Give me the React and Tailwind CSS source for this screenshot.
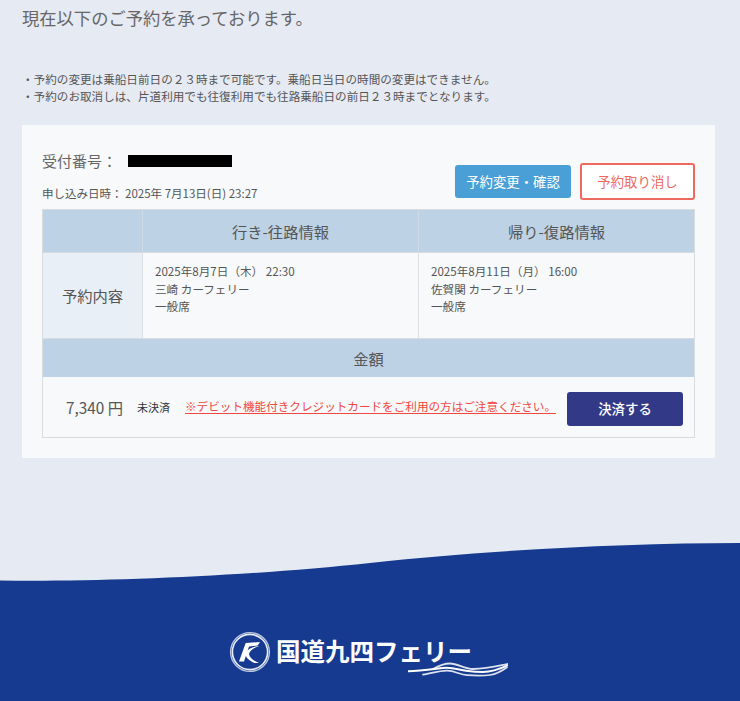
const JP_FONT = "font-['Noto_Sans_CJK_JP','Noto_Sans',sans-serif]"

function LogoMark() {
  return (
    <svg width="42" height="42" viewBox="0 0 42 42" className="shrink-0">
      <circle cx="21" cy="21" r="19.4" fill="none" stroke="#b9c6e2" strokeWidth="1.4" />
      <circle cx="21" cy="21" r="17.6" fill="none" stroke="#e8edf7" strokeWidth="1.6" />
      <path d="M10 30.5 L15 30.5 L20 15.5 L28.7 14.5 L31 11 L16.7 12 Z" fill="#ffffff" />
      <path d="M30.5 15 C 24 17, 20.5 20, 20 23 C 20.5 27, 25 30, 30 32 L 25.5 32 C 21 30, 16.5 27, 16.5 23 C 17 19, 23 15.5, 30.5 15 Z" fill="#ffffff" />
    </svg>
  )
}

function LogoWaves() {
  return (
    <svg width="100" height="18" viewBox="0 0 100 18" className="absolute left-[179px] top-[30px]" fill="none" stroke="#ffffff" strokeLinecap="round">
      <path d="M25 8 C 32 4, 37 2.5, 42 2.5 C 50 2.5, 56 8, 65 8 C 78 8, 90 5, 100 3" strokeWidth="1.8" opacity="0.85" />
      <path d="M0 10.3 C 12 10, 26 8, 35 7 C 44 6, 50 8.5, 58 9.7 C 64 10.5, 69 11, 75 11 C 84 11, 92 8, 99 4.7" strokeWidth="2" />
      <path d="M15 13.7 C 24 12, 32 9.7, 39 9.7 C 47 9.7, 52 14, 59 14.2 C 66 14.6, 74 15, 82 14 C 89 13, 94 10, 99 6.3" strokeWidth="1.7" opacity="0.85" />
    </svg>
  )
}

function TripInfo({ date, port }) {
  return (
    <div className="border-l border-[#dcdfe3] pl-3 pt-[10px] text-[11.6px] leading-[17.5px] text-[#555]">
      <p>{date}</p>
      <p>{port}</p>
      <p>一般席</p>
    </div>
  )
}

export default function App() {
  return (
    <div className={`flex h-[701px] flex-col overflow-hidden bg-[#e6eaf3] ${JP_FONT}`}>
      <main className="flex-1 px-[22px]">
        <h1 className="pt-[6px] text-[17.3px] leading-[24px] text-[#666]">現在以下のご予約を承っております。</h1>

        <div className="mt-[41px] text-[11.6px] leading-[17px] text-[#555]">
          <p>・予約の変更は乗船日前日の２３時まで可能です。乗船日当日の時間の変更はできません。</p>
          <p>・予約のお取消しは、片道利用でも往復利用でも往路乗船日の前日２３時までとなります。</p>
        </div>

        <section className="mt-[20px] h-[333px] w-[693px] bg-[#f7f9fb] px-[20px] pt-[24px]">
          <div className="flex h-[60px] items-start justify-between">
            <div>
              <div className="flex h-[24px] items-center text-[15px] text-[#666]">
                <span>受付番号：</span>
                <span className="ml-[11px] h-[12px] w-[104px] bg-black" />
              </div>
              <p className="mt-[11px] text-[11.5px] leading-[18px] text-[#555]">申し込み日時： 2025年 7月13日(日) 23:27</p>
            </div>
            <div className="mt-[14px] flex items-center gap-[9px]">
              <button type="button" className="h-[33px] w-[116px] rounded-[3px] bg-[#4a9fd6] text-[13.4px] text-white">
                予約変更・確認
              </button>
              <button type="button" className="h-[37px] w-[115px] rounded-[3px] border-2 border-[#ee6a5f] bg-white text-[13.4px] text-[#ee6a5f]">
                予約取り消し
              </button>
            </div>
          </div>

          <div className="h-[229px] w-[653px] border border-[#d9dcdf]">
            <div className="grid h-[42px] grid-cols-[99px_276px_1fr] items-center bg-[#bed2e5] text-center text-[15.3px] text-[#555]">
              <div className="h-full" />
              <div className="flex h-full items-center justify-center border-l border-[#cddbe8]">行き-往路情報</div>
              <div className="flex h-full items-center justify-center border-l border-[#cddbe8]">帰り-復路情報</div>
            </div>
            <div className="grid h-[87px] grid-cols-[99px_276px_1fr] border-y border-[#d9dcdf]">
              <div className="flex items-center justify-center bg-[#e9eff6] text-[15.3px] text-[#555]">予約内容</div>
              <TripInfo date="2025年8月7日（木） 22:30" port="三崎 カーフェリー" />
              <TripInfo date="2025年8月11日（月） 16:00" port="佐賀関 カーフェリー" />
            </div>
            <div className="flex h-[38px] items-center justify-center bg-[#bed2e5] text-[15.3px] text-[#555]">金額</div>
            <div className="flex h-[60px] items-center pl-[23px] pr-[11px]">
              <span className="w-[71px] whitespace-nowrap text-[15.3px] text-[#555]">7,340 円</span>
              <span className="w-[48px] whitespace-nowrap text-[11px] text-[#333]">未決済</span>
              <a href="#" className="whitespace-nowrap text-[11.6px] text-[#f0483e] underline underline-offset-2">
                ※デビット機能付きクレジットカードをご利用の方はご注意ください。
              </a>
              <button type="button" className="ml-auto mt-[3px] h-[34px] w-[116px] rounded-[3px] bg-[#323a88] text-[13.4px] font-medium text-white">
                決済する
              </button>
            </div>
          </div>
        </section>
      </main>

      <footer className="shrink-0">
        <svg width="740" height="38" viewBox="0 0 740 38" className="block">
          <path d="M0 37.5 C 100 39, 250 33, 370 20 C 480 8, 620 0, 740 0 L740 38 L0 38 Z" fill="#153a8f" />
        </svg>
        <div className="h-[120px] bg-[#153a8f] pl-[229px] pt-[50px]">
          <div className="relative flex w-fit items-center gap-[5px]">
            <LogoMark />
            <span className="-mt-[3px] text-[24.5px] font-bold leading-[40px] text-white">国道九四フェリー</span>
            <LogoWaves />
          </div>
        </div>
      </footer>
    </div>
  )
}
